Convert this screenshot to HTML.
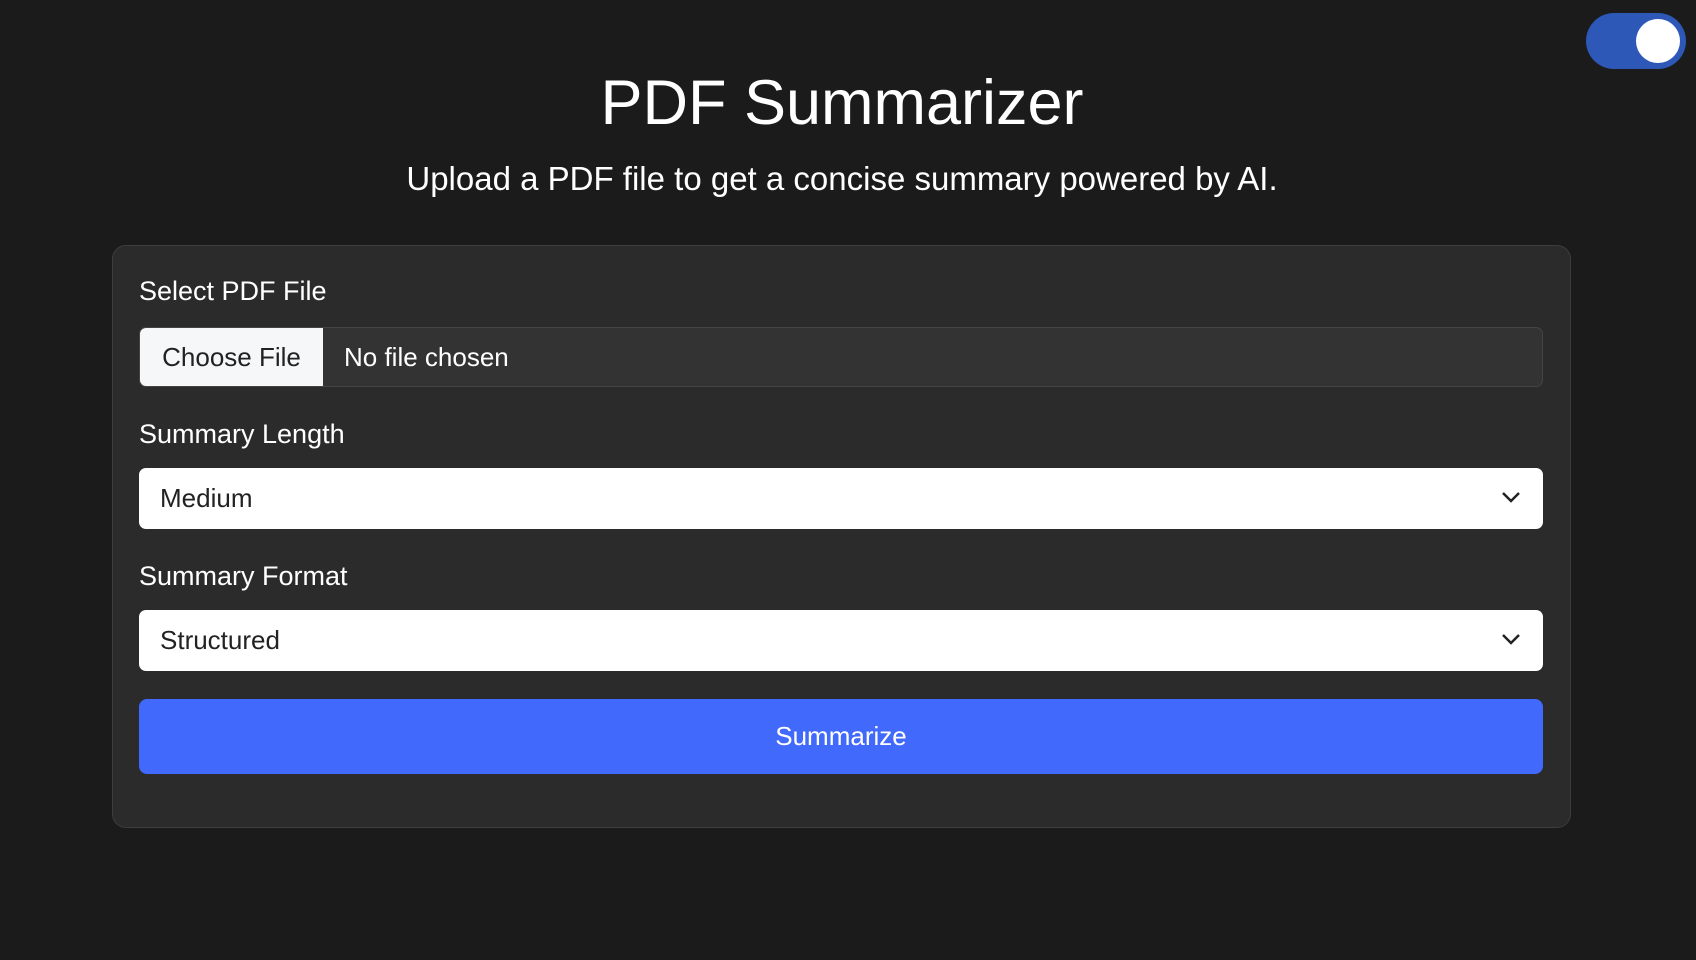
<!DOCTYPE html>
<html><head><style>
body{margin:0;width:1696px;height:960px;background:#1b1b1b;font-family:"Liberation Sans",Arial,sans-serif;color:#fff;position:relative;overflow:hidden}
.toggle{position:absolute;left:1586px;top:13px;width:100px;height:56px;border-radius:28px;background:#2d58b8}
.toggle::after{content:"";position:absolute;left:50px;top:6px;width:44px;height:44px;border-radius:50%;background:#fff}
h1{position:absolute;top:62px;left:0;width:1684px;text-align:center;margin:0;font-weight:normal;font-size:63px;line-height:82px}
.sub{position:absolute;top:158px;left:0;width:1684px;text-align:center;font-size:33px;line-height:42px}
.card{position:absolute;left:112px;top:245px;width:1459px;height:583px;background:#2b2b2b;border:1px solid #3d3d3d;border-radius:14px;box-sizing:border-box}
.lbl{position:absolute;left:139px;font-size:27px;line-height:32px}
.file{position:absolute;left:139px;top:327px;width:1404px;height:60px;background:#333;border:1px solid #444;border-radius:7px;box-sizing:border-box;overflow:hidden}
.file .btn{position:absolute;left:0;top:0;width:183px;height:100%;background:#f6f7f9;color:#222;font-size:26px;line-height:58px;text-align:center}
.file .nf{position:absolute;left:204px;top:0;font-size:26px;line-height:58px}
.sel{position:absolute;left:139px;width:1404px;height:61px;background:#fff;border-radius:7px;color:#222;font-size:26px;line-height:61px;box-sizing:border-box;padding-left:21px}
.sel svg{position:absolute;right:22px;top:22px}
.go{position:absolute;left:139px;top:699px;width:1404px;height:75px;background:#4169fb;border-radius:8px;text-align:center;font-size:26px;line-height:75px}
</style></head><body>
<div class="toggle"></div>
<h1>PDF Summarizer</h1>
<div class="sub">Upload a PDF file to get a concise summary powered by AI.</div>
<div class="card"></div>
<div class="lbl" style="top:275px">Select PDF File</div>
<div class="file"><div class="btn">Choose File</div><div class="nf">No file chosen</div></div>
<div class="lbl" style="top:418px">Summary Length</div>
<div class="sel" style="top:468px">Medium<svg width="20" height="14" viewBox="0 0 20 14"><path d="M2 3l8 8 8-8" fill="none" stroke="#222" stroke-width="2.5"/></svg></div>
<div class="lbl" style="top:560px">Summary Format</div>
<div class="sel" style="top:610px">Structured<svg width="20" height="14" viewBox="0 0 20 14"><path d="M2 3l8 8 8-8" fill="none" stroke="#222" stroke-width="2.5"/></svg></div>
<div class="go">Summarize</div>
</body></html>
